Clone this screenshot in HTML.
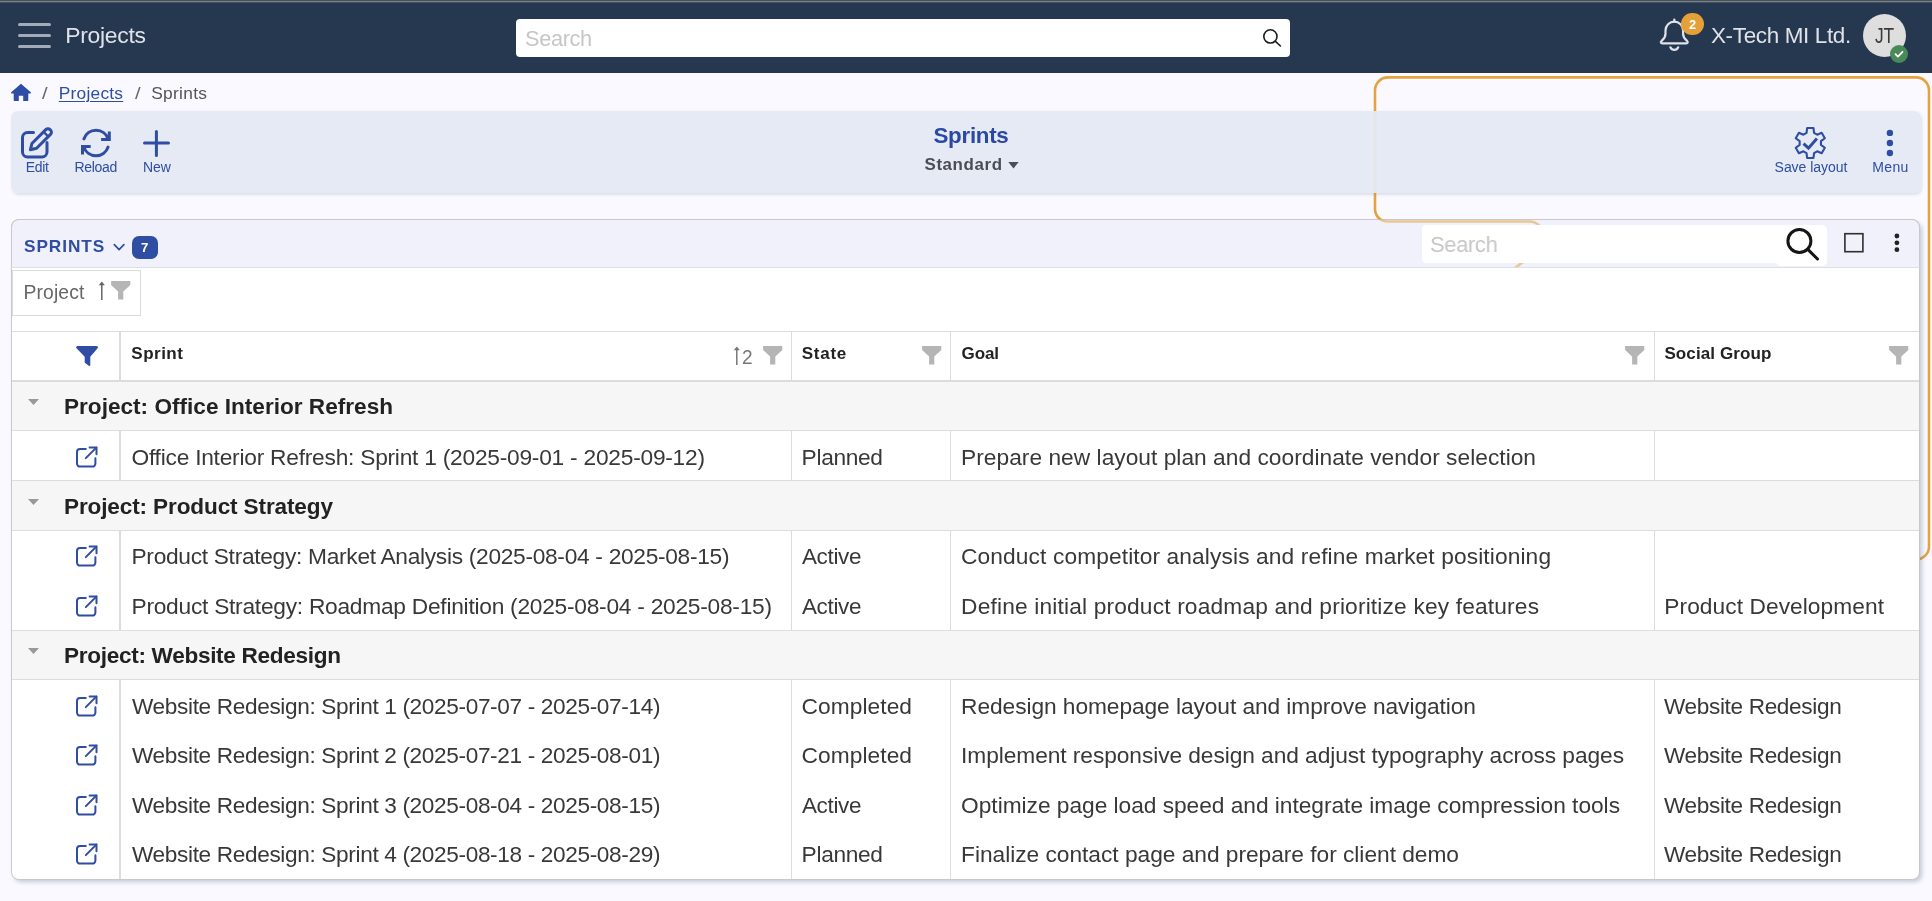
<!DOCTYPE html>
<html lang="en"><head><meta charset="utf-8"><title>Sprints</title>
<style>
*{box-sizing:border-box;margin:0;padding:0}
html,body{width:1932px;height:901px;overflow:hidden}
body{position:relative;background:#f9f9ff;font-family:"Liberation Sans",sans-serif;}
.t{position:absolute;white-space:pre;line-height:1;display:block;transform-origin:0 50%}
.abs,.ic,.lnk,.car{position:absolute;display:block}
#topstrip{position:absolute;left:0;top:0;width:1932px;height:3px;background:linear-gradient(#47535c 0,#47535c 1px,#777f87 1px,#777f87 2px,#45515d 2px,#45515d 3px)}
#nav{position:absolute;left:0;top:3px;width:1932px;height:70px;background:#263750}
#nsearch{position:absolute;left:516px;top:19px;width:774px;height:38px;background:#fff;border-radius:4px}
#toolbar{position:absolute;left:11px;top:111px;width:1909.5px;height:81.5px;background:rgba(229,233,243,.95);border-radius:7px;box-shadow:1px 1.500px 2.500px rgba(120,125,150,.20)}
#card{position:absolute;left:11px;top:219px;width:1909px;height:661px;border:1px solid #c8c8cd;border-radius:8px;background:#fff;overflow:hidden;box-shadow:2.500px 3px 4px -1px rgba(90,95,120,.32)}
#chead{position:absolute;left:11px;top:219px;width:1909px;height:49px;background:#f0f1fa;border:1px solid #c8c8cd;border-bottom:1px solid #dddfe7;border-radius:8px 8px 0 0}
#csearch{position:absolute;left:1422px;top:225px;width:358px;height:38px;background:#fff;border-radius:4px 0 0 4px}
#csearchb{position:absolute;left:1776px;top:225px;width:51px;height:40.5px;background:#fff;border-radius:0 5px 5px 5px}
#chk{position:absolute;left:1844px;top:233px;width:19.5px;height:19.5px;border:1.6px solid #2a2a2a;background:#f2f2f9}
#chip{position:absolute;left:12px;top:270px;width:129px;height:46px;border:1px solid #dadada;background:#fff}
.hline{position:absolute;left:12px;width:1907px;background:#ddd}
.vline{position:absolute;width:1.4px;background:#dcdcdc}
.grow{position:absolute;left:12px;width:1907px;height:48.5px;background:#f6f6f6}
#badge7{position:absolute;left:132px;top:236px;width:26px;height:23px;border-radius:7px;background:#2e4da3}
#root{position:absolute;left:0;top:0;width:1932px;height:901px;will-change:transform}
</style></head><body><div id="root">
<div id="topstrip"></div>
<header id="nav"></header>
<svg class="abs" style="left:16px;top:21px" width="38" height="30" viewBox="0 0 38 30" fill="none" stroke="#a3abb9" stroke-width="3" stroke-linecap="round"><path d="M3.5 3.5h30M3.5 14.4h30M3.5 25.4h30"/></svg>
<div id="nsearch"></div>
<svg class="abs" style="left:1260px;top:26px" width="24" height="24" viewBox="0 0 24 24" fill="none" stroke="#1d1d1d" stroke-width="1.6" stroke-linecap="round"><circle cx="10.4" cy="10.4" r="6.6"/><path d="M15.2 15.2L20.4 20"/></svg>
<!-- bell -->
<svg class="abs" style="left:1658px;top:17px" width="34" height="36" viewBox="0 0 34 36" fill="none" stroke="#dfe2e8" stroke-width="2.2" stroke-linecap="round" stroke-linejoin="round"><path d="M16.300 2.500v2.200"/><path d="M7.500 13.500a8.800 8.800 0 0 1 17.600 0v3.300c0 4 2.200 5.500 4 7.200 1.200 1.200.600 2.400-.800 2.400H4.300c-1.400 0-2-1.200-.800-2.400 1.800-1.700 4-3.200 4-7.200z"/><path d="M12.400 30.300c.800 1.800 2.200 2.600 3.900 2.600s3.100-.800 3.900-2.600"/></svg>
<div class="abs" style="left:1681.300px;top:12.700px;width:22.600px;height:22.600px;border-radius:50%;background:#e5a039"></div>
<div class="abs" style="left:1862.800px;top:13.900px;width:43.200px;height:43.200px;border-radius:50%;background:#dedede"></div>
<div class="abs" style="left:1890.200px;top:45px;width:18px;height:18px;border-radius:50%;background:#488b59"></div>
<svg class="abs" style="left:1893px;top:48px" width="12" height="12" viewBox="0 0 12 12" fill="none" stroke="#fff" stroke-width="1.8" stroke-linecap="round" stroke-linejoin="round"><path d="M2.500 6.200l2.400 2.400 4.600-4.800"/></svg>
<!-- breadcrumb home -->
<svg class="abs" style="left:10px;top:82px" width="23" height="21" viewBox="0 0 23 21"><path d="M11 1.700L1.200 10.300c-.500.500-.200 1.200.400 1.200h2.100v7.100c0 .300.200.500.500.500h4.300c.200 0 .300-.100.300-.300v-4.700c0-.200.100-.300.300-.300h3.800c.200 0 .300.100.300.300v4.700c0 .200.100.300.300.300h4.300c.300 0 .500-.200.500-.500v-7.100h2.100c.600 0 .900-.700.400-1.200z" fill="#2e4da3"/></svg>
<!-- orange highlight -->
<svg class="abs" style="left:0;top:0" width="1932" height="901" viewBox="0 0 1932 901" fill="none" stroke="#e4a340" stroke-width="2.600"><path d="M1919 559.500h-3a13 13 0 0 0 13-13V90.400a13 13 0 0 0-13-13H1388a13 13 0 0 0-13 13V209a12.500 12.500 0 0 0 12.500 12.500h141.500c8 0 13 5 13 13 0 10-6 18-14 24l-16 12"/></svg>
<div id="toolbar"></div>
<!-- edit icon -->
<svg class="abs" style="left:19px;top:125px" width="36" height="36" viewBox="0 0 36 36" fill="none" stroke="#2e4da3" stroke-width="3" stroke-linecap="round" stroke-linejoin="round"><path d="M14.500 7.600H8.500a5 5 0 0 0-5 5V27a5 5 0 0 0 5 5H23a5 5 0 0 0 5-5v-9.500"/><path d="M26.800 4.600a3 3 0 0 1 4.300 0l.4.400a3 3 0 0 1 0 4.300L17.600 23.200l-6.200 1.600 1.500-6.300z"/><path d="M24.600 6.900l4.600 4.600" stroke-width="2.400"/></svg>
<!-- reload -->
<svg class="abs" style="left:78px;top:125px" width="36" height="36" viewBox="0 0 36 36" fill="none" stroke="#2e4da3" stroke-width="3" stroke-linecap="round" stroke-linejoin="round"><path d="M5.900 13.900A12.800 12.800 0 0 1 30.200 14"/><path d="M31.300 6.600v7.800h-8.200" stroke-linejoin="miter" stroke-linecap="butt"/><path d="M30.100 22.100A12.800 12.800 0 0 1 5.800 22"/><path d="M4.500 29.400v-7.800h8.200" stroke-linejoin="miter" stroke-linecap="butt"/></svg>
<!-- plus -->
<svg class="abs" style="left:141px;top:128px" width="30" height="30" viewBox="0 0 30 30" fill="none" stroke="#2e4da3" stroke-width="3" stroke-linecap="round"><path d="M15.400 3.500v24M3.500 15h24"/></svg>
<!-- caret after Standard -->
<svg class="abs" style="left:1008px;top:162px" width="11" height="7" viewBox="0 0 11 7"><path d="M0.300 0h10.400L5.500 6.400z" fill="#4b4d55"/></svg>
<!-- gear check -->
<svg class="abs" style="left:1792px;top:125px" width="36" height="36" viewBox="0 0 36 36" fill="none" stroke="#2e4da3" stroke-width="2.100" stroke-linejoin="round"><path d="M14.54 7.88 L15.12 3.03 L21.48 3.03 L22.06 7.88 L25.18 9.68 L29.67 7.76 L32.85 13.27 L28.95 16.20 L28.95 19.80 L32.85 22.73 L29.67 28.24 L25.18 26.32 L22.06 28.12 L21.48 32.97 L15.12 32.97 L14.54 28.12 L11.42 26.32 L6.93 28.24 L3.75 22.73 L7.65 19.80 L7.65 16.20 L3.75 13.27 L6.93 7.76 L11.42 9.68Z"/><path d="M11.500 18.600l5 4.600 8.400-9.800" stroke-width="3" stroke-linejoin="miter"/></svg>
<!-- menu dots -->
<svg class="abs" style="left:1884px;top:128px" width="12" height="30" viewBox="0 0 12 30" fill="#2e4da3"><circle cx="5.900" cy="4.900" r="3.200"/><circle cx="5.900" cy="15" r="3.200"/><circle cx="5.900" cy="25" r="3.200"/></svg>

<section id="card"></section>
<div id="chead"></div>
<svg class="abs" style="left:112px;top:242px" width="14" height="10" viewBox="0 0 14 10" fill="none" stroke="#2e4da3" stroke-width="1.700" stroke-linecap="round" stroke-linejoin="round"><path d="M2.300 2.700l4.800 4.900 4.800-4.900"/></svg>
<div id="badge7"></div>
<svg class="abs" style="left:1370px;top:215px" width="200" height="52" viewBox="1370 215 200 52" fill="none" stroke="#e4a340" stroke-opacity=".55" stroke-width="2.600"><path d="M1375 209a12.500 12.500 0 0 0 12.500 12.500h141.500c8 0 13 5 13 13 0 10-6 18-14 24l-18 13"/></svg>
<div id="csearch"></div><div id="csearchb"></div>
<svg class="abs" style="left:1783px;top:225px" width="40" height="40" viewBox="0 0 40 40" fill="none" stroke="#151515" stroke-width="3" stroke-linecap="round"><circle cx="16.400" cy="16" r="11.500"/><path d="M24.800 24.400L34.500 34"/></svg>
<svg class="abs" style="left:1843px;top:232px" width="22" height="22" viewBox="0 0 22 22"><rect x="1.900" y="1.700" width="18" height="18" fill="#f1f2f9" stroke="#2e2e2e" stroke-width="1.600"/></svg>
<svg class="abs" style="left:1892px;top:232px" width="10" height="22" viewBox="0 0 10 22" fill="#222"><circle cx="4.900" cy="4" r="2.400"/><circle cx="4.900" cy="10.800" r="2.400"/><circle cx="4.900" cy="17.700" r="2.400"/></svg>
<div id="chip"></div>
<svg class="abs" style="left:97px;top:281px" width="10" height="20" viewBox="0 0 10 20"><path d="M4.050 3.500h1.500V19h-1.500z" fill="#666"/><path d="M4.800 0.500L7.900 4.200H1.700z" fill="#666"/></svg>
<svg class="ic" style="left:111.2px;top:281px" width="20" height="19" viewBox="0 0 20 19"><path d="M0.100 0h19.200v4L12.300 10.400V18.600H7.100V10.400L0.100 4z" fill="#b5b5b5"/></svg>
<!-- column header -->
<div class="hline" style="top:331px;height:1.2px"></div>
<div class="hline" style="top:380px;height:2px;background:#dcdcdc"></div>
<svg class="abs" style="left:75px;top:345px" width="24" height="22" viewBox="0 0 24 22"><path d="M2.600 0.900h18.900c1.300 0 1.900 1.300 1.100 2.300l-7.300 8.600v8.200c0 .800-.900 1.200-1.500.700l-3.600-2.700c-.400-.300-.500-.600-.500-1v-5.200L1.500 3.200C.700 2.200 1.300.900 2.600.900z" fill="#2e4da3"/></svg>
<svg class="abs" style="left:731.5px;top:346px" width="10" height="20" viewBox="0 0 10 20"><path d="M4.050 3.500h1.500V19h-1.500z" fill="#777"/><path d="M4.800 0.500L7.900 4.200H1.700z" fill="#777"/></svg>
<svg class="ic" style="left:762.6px;top:346.3px" width="20" height="19" viewBox="0 0 20 19"><path d="M0.100 0h19.200v4L12.300 10.400V18.600H7.100V10.400L0.100 4z" fill="#b5b5b5"/></svg>
<svg class="ic" style="left:921.6px;top:346.3px" width="20" height="19" viewBox="0 0 20 19"><path d="M0.100 0h19.200v4L12.300 10.400V18.600H7.100V10.400L0.100 4z" fill="#b5b5b5"/></svg>
<svg class="ic" style="left:1625px;top:346.3px" width="20" height="19" viewBox="0 0 20 19"><path d="M0.100 0h19.200v4L12.300 10.400V18.600H7.100V10.400L0.100 4z" fill="#b5b5b5"/></svg>
<svg class="ic" style="left:1889px;top:346.3px" width="20" height="19" viewBox="0 0 20 19"><path d="M0.100 0h19.200v4L12.300 10.400V18.600H7.100V10.400L0.100 4z" fill="#b5b5b5"/></svg>
<div class="grow" style="top:382px;height:48px"></div><svg class="car" style="left:28px;top:399.3px" width="11" height="6" viewBox="0 0 11 6"><path d="M0 0h11L5.5 6z" fill="#999"/></svg><svg class="lnk" style="left:74px;top:444px" width="26" height="26" viewBox="0 0 26 26" fill="none" stroke="#2e4da3" stroke-width="2" stroke-linecap="round" stroke-linejoin="round"><path d="M11.800 5H6a3 3 0 0 0-3 3v11.600a3 3 0 0 0 3 3h12.400a3 3 0 0 0 3-3v-5.400"/><path d="M11.800 14.100L22.300 3.600"/><path d="M15.600 3.400h6.900v6.900"/></svg><div class="grow" style="top:481px;height:49px"></div><svg class="car" style="left:28px;top:499.3px" width="11" height="6" viewBox="0 0 11 6"><path d="M0 0h11L5.5 6z" fill="#999"/></svg><svg class="lnk" style="left:74px;top:543px" width="26" height="26" viewBox="0 0 26 26" fill="none" stroke="#2e4da3" stroke-width="2" stroke-linecap="round" stroke-linejoin="round"><path d="M11.800 5H6a3 3 0 0 0-3 3v11.600a3 3 0 0 0 3 3h12.400a3 3 0 0 0 3-3v-5.400"/><path d="M11.800 14.100L22.300 3.600"/><path d="M15.600 3.400h6.900v6.900"/></svg><svg class="lnk" style="left:74px;top:593px" width="26" height="26" viewBox="0 0 26 26" fill="none" stroke="#2e4da3" stroke-width="2" stroke-linecap="round" stroke-linejoin="round"><path d="M11.800 5H6a3 3 0 0 0-3 3v11.600a3 3 0 0 0 3 3h12.400a3 3 0 0 0 3-3v-5.400"/><path d="M11.800 14.100L22.300 3.600"/><path d="M15.600 3.400h6.900v6.900"/></svg><div class="grow" style="top:631px;height:48px"></div><svg class="car" style="left:28px;top:648.3px" width="11" height="6" viewBox="0 0 11 6"><path d="M0 0h11L5.5 6z" fill="#999"/></svg><svg class="lnk" style="left:74px;top:693px" width="26" height="26" viewBox="0 0 26 26" fill="none" stroke="#2e4da3" stroke-width="2" stroke-linecap="round" stroke-linejoin="round"><path d="M11.800 5H6a3 3 0 0 0-3 3v11.600a3 3 0 0 0 3 3h12.400a3 3 0 0 0 3-3v-5.400"/><path d="M11.800 14.100L22.300 3.600"/><path d="M15.600 3.400h6.900v6.900"/></svg><svg class="lnk" style="left:74px;top:742px" width="26" height="26" viewBox="0 0 26 26" fill="none" stroke="#2e4da3" stroke-width="2" stroke-linecap="round" stroke-linejoin="round"><path d="M11.800 5H6a3 3 0 0 0-3 3v11.600a3 3 0 0 0 3 3h12.400a3 3 0 0 0 3-3v-5.400"/><path d="M11.800 14.100L22.300 3.600"/><path d="M15.600 3.400h6.900v6.900"/></svg><svg class="lnk" style="left:74px;top:792px" width="26" height="26" viewBox="0 0 26 26" fill="none" stroke="#2e4da3" stroke-width="2" stroke-linecap="round" stroke-linejoin="round"><path d="M11.800 5H6a3 3 0 0 0-3 3v11.600a3 3 0 0 0 3 3h12.400a3 3 0 0 0 3-3v-5.400"/><path d="M11.800 14.100L22.300 3.600"/><path d="M15.600 3.400h6.900v6.900"/></svg><svg class="lnk" style="left:74px;top:841px" width="26" height="26" viewBox="0 0 26 26" fill="none" stroke="#2e4da3" stroke-width="2" stroke-linecap="round" stroke-linejoin="round"><path d="M11.800 5H6a3 3 0 0 0-3 3v11.600a3 3 0 0 0 3 3h12.400a3 3 0 0 0 3-3v-5.400"/><path d="M11.800 14.100L22.300 3.600"/><path d="M15.600 3.400h6.900v6.900"/></svg>
<!-- row lines -->
<div class="hline" style="top:430px;height:1px"></div>
<div class="hline" style="top:480px;height:1px"></div>
<div class="hline" style="top:530px;height:1px"></div>
<div class="hline" style="top:630px;height:1px"></div>
<div class="hline" style="top:679px;height:1px"></div>
<!-- col lines -->
<div class="vline" style="left:119.400px;top:332px;height:48px"></div>
<div class="vline" style="left:790.900px;top:332px;height:48px"></div>
<div class="vline" style="left:949.700px;top:332px;height:48px"></div>
<div class="vline" style="left:1654px;top:332px;height:48px"></div>
<div class="vline" style="left:119.4px;top:431px;height:49px"></div><div class="vline" style="left:119.4px;top:531px;height:99px"></div><div class="vline" style="left:119.4px;top:680px;height:199px"></div><div class="vline" style="left:790.9px;top:431px;height:49px"></div><div class="vline" style="left:790.9px;top:531px;height:99px"></div><div class="vline" style="left:790.9px;top:680px;height:199px"></div><div class="vline" style="left:949.7px;top:431px;height:49px"></div><div class="vline" style="left:949.7px;top:531px;height:99px"></div><div class="vline" style="left:949.7px;top:680px;height:199px"></div><div class="vline" style="left:1654px;top:431px;height:49px"></div><div class="vline" style="left:1654px;top:531px;height:99px"></div><div class="vline" style="left:1654px;top:680px;height:199px"></div>
<span class="t" style="left:65.3px;top:24.00px;font-size:22.89px;font-weight:400;color:#dfe2e8;letter-spacing:-0.277px;">Projects</span><span class="t" style="left:524.5px;top:28.00px;font-size:22.36px;font-weight:400;color:#c6c6c6;letter-spacing:-0.350px;transform:scaleX(0.9724);">Search</span><span class="t" style="left:1710.7px;top:24.00px;font-size:22.89px;font-weight:400;color:#dfe2e8;letter-spacing:-0.350px;transform:scaleX(0.9810);">X-Tech MI Ltd.</span><span class="t" style="left:1875.0px;top:25.00px;font-size:22.47px;font-weight:400;color:#3a3a3a;letter-spacing:-0.350px;transform:scaleX(0.7718);">JT</span><span class="t" style="left:1689.0px;top:18.00px;font-size:13.58px;font-weight:700;color:#fff;letter-spacing:0.000px;transform:scaleX(0.9521);">2</span><span class="t" style="left:42.0px;top:85.00px;font-size:16.2px;font-weight:400;color:#666;letter-spacing:0.000px;transform:scaleX(1.2444);">/</span><span class="t" style="left:58.8px;top:85.00px;font-size:17.35px;font-weight:400;color:#2e4da3;letter-spacing:0.221px;text-decoration:underline;text-underline-offset:1.5px;text-decoration-thickness:1px">Projects</span><span class="t" style="left:134.8px;top:85.00px;font-size:16.2px;font-weight:400;color:#666;letter-spacing:0.000px;transform:scaleX(1.2444);">/</span><span class="t" style="left:151.2px;top:85.00px;font-size:17.35px;font-weight:400;color:#555;letter-spacing:0.303px;">Sprints</span><span class="t" style="left:25.8px;top:160.00px;font-size:14px;font-weight:400;color:#2e4da3;letter-spacing:-0.308px;">Edit</span><span class="t" style="left:74.6px;top:160.00px;font-size:14px;font-weight:400;color:#2e4da3;letter-spacing:-0.350px;">Reload</span><span class="t" style="left:142.9px;top:160.00px;font-size:14px;font-weight:400;color:#2e4da3;letter-spacing:0.042px;">New</span><span class="t" style="left:933.5px;top:125.00px;font-size:22.36px;font-weight:700;color:#2a48a5;letter-spacing:-0.289px;">Sprints</span><span class="t" style="left:924.5px;top:157.00px;font-size:16.93px;font-weight:700;color:#4b4d55;letter-spacing:0.594px;">Standard</span><span class="t" style="left:1774.6px;top:160.00px;font-size:14px;font-weight:400;color:#2e4da3;letter-spacing:-0.047px;">Save layout</span><span class="t" style="left:1872.3px;top:160.00px;font-size:14px;font-weight:400;color:#2e4da3;letter-spacing:0.323px;">Menu</span><span class="t" style="left:24.0px;top:238.00px;font-size:17.24px;font-weight:700;color:#2e4da3;letter-spacing:0.916px;">SPRINTS</span><span class="t" style="left:141.3px;top:241.00px;font-size:13.58px;font-weight:700;color:#fff;letter-spacing:0.000px;transform:scaleX(0.9785);">7</span><span class="t" style="left:1429.6px;top:234.00px;font-size:22.36px;font-weight:400;color:#c6c6c6;letter-spacing:-0.350px;transform:scaleX(0.9796);">Search</span><span class="t" style="left:23.6px;top:283.00px;font-size:19.3px;font-weight:400;color:#666;letter-spacing:0.114px;">Project</span><span class="t" style="left:742.4px;top:347.00px;font-size:20.48px;font-weight:400;color:#777;letter-spacing:0.000px;transform:scaleX(0.9306);">2</span><span class="t" style="left:131.3px;top:345.00px;font-size:17.03px;font-weight:700;color:#222;letter-spacing:0.489px;">Sprint</span><span class="t" style="left:801.7px;top:345.00px;font-size:17.03px;font-weight:700;color:#222;letter-spacing:0.748px;">State</span><span class="t" style="left:961.6px;top:345.00px;font-size:17.03px;font-weight:700;color:#222;letter-spacing:-0.109px;">Goal</span><span class="t" style="left:1664.4px;top:345.00px;font-size:17.03px;font-weight:700;color:#222;letter-spacing:0.109px;">Social Group</span><span class="t" style="left:64.0px;top:396.00px;font-size:22.57px;font-weight:700;color:#222;letter-spacing:0.016px;">Project: Office Interior Refresh</span><span class="t" style="left:131.5px;top:446.00px;font-size:22.73px;font-weight:400;color:#383838;letter-spacing:-0.229px;">Office Interior Refresh: Sprint 1 (2025-09-01 - 2025-09-12)</span><span class="t" style="left:801.6px;top:446.00px;font-size:22.73px;font-weight:400;color:#383838;letter-spacing:-0.332px;">Planned</span><span class="t" style="left:961.1px;top:446.00px;font-size:22.73px;font-weight:400;color:#383838;letter-spacing:0.028px;">Prepare new layout plan and coordinate vendor selection</span><span class="t" style="left:64.0px;top:496.00px;font-size:22.57px;font-weight:700;color:#222;letter-spacing:-0.128px;">Project: Product Strategy</span><span class="t" style="left:131.5px;top:545.00px;font-size:22.73px;font-weight:400;color:#383838;letter-spacing:-0.293px;">Product Strategy: Market Analysis (2025-08-04 - 2025-08-15)</span><span class="t" style="left:801.6px;top:545.00px;font-size:22.73px;font-weight:400;color:#383838;letter-spacing:-0.350px;transform:scaleX(0.9879);">Active</span><span class="t" style="left:961.1px;top:545.00px;font-size:22.73px;font-weight:400;color:#383838;letter-spacing:0.116px;">Conduct competitor analysis and refine market positioning</span><span class="t" style="left:131.5px;top:595.00px;font-size:22.73px;font-weight:400;color:#383838;letter-spacing:-0.245px;">Product Strategy: Roadmap Definition (2025-08-04 - 2025-08-15)</span><span class="t" style="left:801.6px;top:595.00px;font-size:22.73px;font-weight:400;color:#383838;letter-spacing:-0.350px;transform:scaleX(0.9879);">Active</span><span class="t" style="left:961.1px;top:595.00px;font-size:22.73px;font-weight:400;color:#383838;letter-spacing:0.169px;">Define initial product roadmap and prioritize key features</span><span class="t" style="left:1664.3px;top:595.00px;font-size:22.73px;font-weight:400;color:#383838;letter-spacing:0.068px;">Product Development</span><span class="t" style="left:64.0px;top:645.00px;font-size:22.57px;font-weight:700;color:#222;letter-spacing:-0.300px;">Project: Website Redesign</span><span class="t" style="left:131.5px;top:695.00px;font-size:22.73px;font-weight:400;color:#383838;letter-spacing:-0.350px;transform:scaleX(0.9951);">Website Redesign: Sprint 1 (2025-07-07 - 2025-07-14)</span><span class="t" style="left:801.6px;top:695.00px;font-size:22.73px;font-weight:400;color:#383838;letter-spacing:0.066px;">Completed</span><span class="t" style="left:961.1px;top:695.00px;font-size:22.73px;font-weight:400;color:#383838;letter-spacing:-0.064px;">Redesign homepage layout and improve navigation</span><span class="t" style="left:1664.3px;top:695.00px;font-size:22.73px;font-weight:400;color:#383838;letter-spacing:-0.350px;transform:scaleX(0.9943);">Website Redesign</span><span class="t" style="left:131.5px;top:744.00px;font-size:22.73px;font-weight:400;color:#383838;letter-spacing:-0.350px;transform:scaleX(0.9951);">Website Redesign: Sprint 2 (2025-07-21 - 2025-08-01)</span><span class="t" style="left:801.6px;top:744.00px;font-size:22.73px;font-weight:400;color:#383838;letter-spacing:0.066px;">Completed</span><span class="t" style="left:961.1px;top:744.00px;font-size:22.73px;font-weight:400;color:#383838;letter-spacing:-0.064px;">Implement responsive design and adjust typography across pages</span><span class="t" style="left:1664.3px;top:744.00px;font-size:22.73px;font-weight:400;color:#383838;letter-spacing:-0.350px;transform:scaleX(0.9943);">Website Redesign</span><span class="t" style="left:131.5px;top:794.00px;font-size:22.73px;font-weight:400;color:#383838;letter-spacing:-0.350px;transform:scaleX(0.9951);">Website Redesign: Sprint 3 (2025-08-04 - 2025-08-15)</span><span class="t" style="left:801.6px;top:794.00px;font-size:22.73px;font-weight:400;color:#383838;letter-spacing:-0.350px;transform:scaleX(0.9879);">Active</span><span class="t" style="left:961.1px;top:794.00px;font-size:22.73px;font-weight:400;color:#383838;letter-spacing:-0.026px;">Optimize page load speed and integrate image compression tools</span><span class="t" style="left:1664.3px;top:794.00px;font-size:22.73px;font-weight:400;color:#383838;letter-spacing:-0.350px;transform:scaleX(0.9943);">Website Redesign</span><span class="t" style="left:131.5px;top:843.00px;font-size:22.73px;font-weight:400;color:#383838;letter-spacing:-0.350px;transform:scaleX(0.9951);">Website Redesign: Sprint 4 (2025-08-18 - 2025-08-29)</span><span class="t" style="left:801.6px;top:843.00px;font-size:22.73px;font-weight:400;color:#383838;letter-spacing:-0.332px;">Planned</span><span class="t" style="left:961.1px;top:843.00px;font-size:22.73px;font-weight:400;color:#383838;letter-spacing:-0.020px;">Finalize contact page and prepare for client demo</span><span class="t" style="left:1664.3px;top:843.00px;font-size:22.73px;font-weight:400;color:#383838;letter-spacing:-0.350px;transform:scaleX(0.9943);">Website Redesign</span>
</div></body></html>
